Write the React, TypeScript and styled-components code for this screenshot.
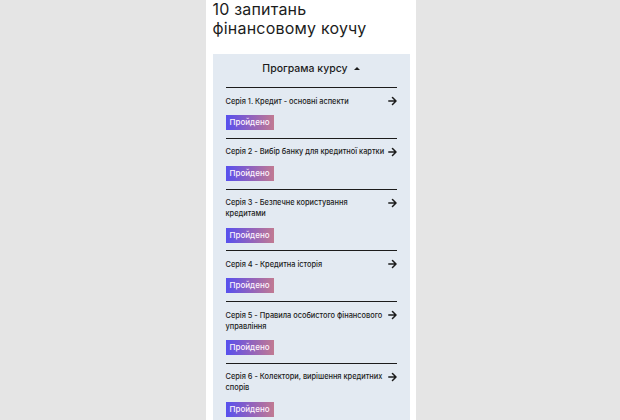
import React from 'react';
import styled, { createGlobalStyle } from 'styled-components';

const GlobalStyle = createGlobalStyle`
    html, body {
        margin: 0;
        padding: 0;
        background: #e5e5e5;
        font-family: Inter, "Noto Sans", sans-serif;
        color: #1c1c1c;
    }
`

const lessons = [
    'Серія 1. Кредит - основні аспекти',
    'Серія 2 - Вибір банку для кредитної картки',
    'Серія 3 - Безпечне користування кредитами',
    'Серія 4 - Кредитна історія',
    'Серія 5 - Правила особистого фінансового управління',
    'Серія 6 - Колектори, вирішення кредитних спорів',
]

function Arrow() {
    return (
        <ArrowIcon width="9" height="10" viewBox="0 0 9 10" fill="none">
            <path d="M0.8 5h7M4.5 1.5L8 5 4.5 8.5" stroke="#1c1c1c" strokeWidth="1.5" strokeLinecap="round" strokeLinejoin="round" />
        </ArrowIcon>
    )
}

function App() {
    return (
        <Page>
            <GlobalStyle />
            <Column>
                <Title>10 запитань<br />фінансовому коучу</Title>
                <Program>
                    <ProgramHead>
                        Програма курсу
                        <Caret />
                    </ProgramHead>
                    {lessons.map(lesson => (
                        <Lesson key={lesson}>
                            <LessonRow>
                                <LessonName>{lesson}</LessonName>
                                <Arrow />
                            </LessonRow>
                            <Badge>Пройдено</Badge>
                        </Lesson>
                    ))}
                </Program>
            </Column>
        </Page>
    )
}

const Page = styled.div`
    height: 420px;
    overflow: hidden;
    display: flex;
    justify-content: center;
`

const Column = styled.div`
    width: 210px;
    margin-left: 1px;
    background: #fff;
    padding: 0 6px 0 7px;
    box-sizing: border-box;
`

const Title = styled.h1`
    margin: 0;
    font-size: 16px;
    line-height: 19px;
    font-weight: 400;
    letter-spacing: 0.2px;
`

const Program = styled.div`
    margin-top: 16px;
    background: #e3eaf2;
    padding: 0 13px;
`

const ProgramHead = styled.div`
    display: flex;
    align-items: center;
    justify-content: center;
    gap: 6px;
    padding: 8px 0 11px;
    font-size: 10.5px;
    line-height: 14px;
    font-weight: 500;
    border-bottom: 1.5px solid #1c1c1c;
`

const Caret = styled.span`
    width: 0;
    height: 0;
    border-left: 3px solid transparent;
    border-right: 3px solid transparent;
    border-bottom: 3.5px solid #1c1c1c;
    margin-top: -1px;
`

const Lesson = styled.div`
    padding: 7.5px 0 7.8px;
    border-bottom: 1.5px solid #1c1c1c;
`

const LessonRow = styled.div`
    display: flex;
    align-items: flex-start;
    justify-content: space-between;
`

const LessonName = styled.div`
    font-size: 7.4px;
    line-height: 11px;
    font-weight: 500;
`

const ArrowIcon = styled.svg`
    flex-shrink: 0;
    margin-top: 0.5px;
`

const Badge = styled.div`
    display: inline-block;
    margin-top: 8.5px;
    height: 15px;
    line-height: 15px;
    padding: 0 4px;
    font-size: 8px;
    font-weight: 500;
    color: #fdf3fb;
    background: linear-gradient(90deg, #5750ee 0%, #8e61c0 50%, #c17a92 100%);
`

export default App;
